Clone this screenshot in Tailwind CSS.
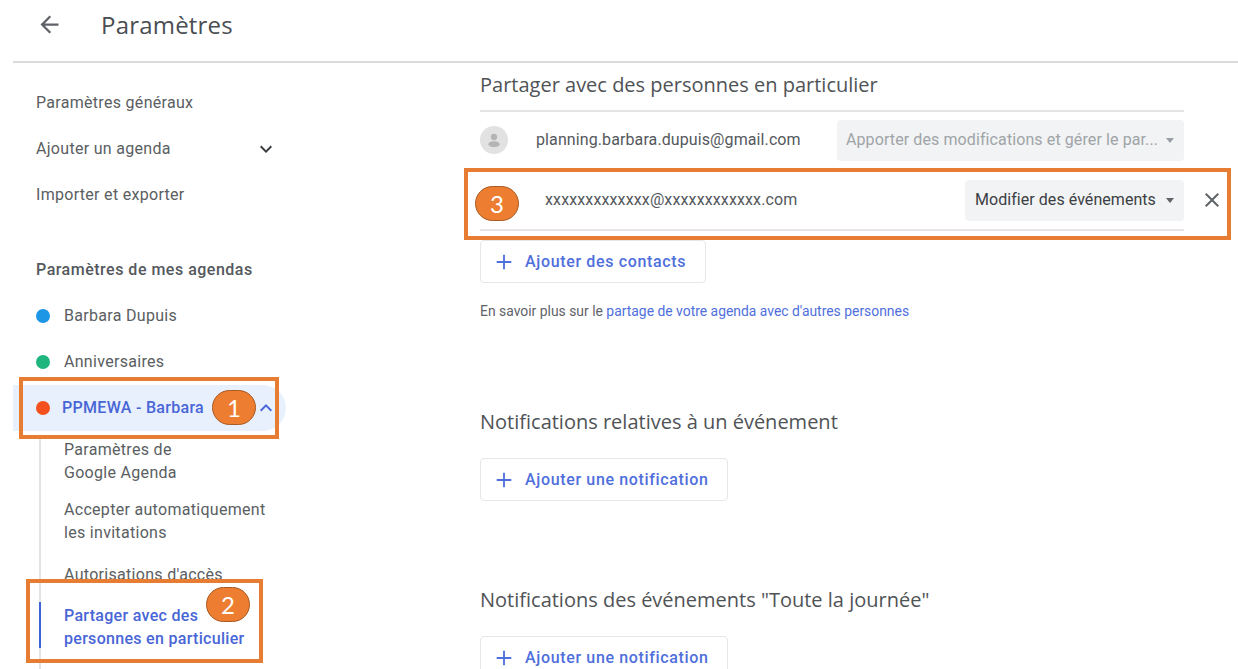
<!DOCTYPE html>
<html lang="fr">
<head>
  <meta charset="UTF-8" />
  <title>Paramètres</title>
  <script src="https://cdn.jsdelivr.net/npm/@tailwindcss/browser@4"></script>
</head>
<body class="bg-white">
  <div class="relative w-[1238px] h-[669px] overflow-hidden bg-white font-['Roboto',sans-serif] text-[#3c4043]">

    <!-- Barre du haut -->
    <header class="ml-[13px] h-[63px] border-b-2 border-[#dcdcdc] flex items-center pb-[12px]">
      <svg class="ml-[23px] w-[27px] h-[27px] text-[#5f6368]" viewBox="0 0 24 24" fill="currentColor"><path d="M20 11H7.83l5.59-5.59L12 4l-8 8 8 8 1.41-1.41L7.83 13H20v-2z"/></svg>
      <h1 class="ml-[38px] text-[24px] leading-[30px] tracking-[0.2px] font-['Open_Sans',sans-serif] text-[#4a4e52]">Paramètres</h1>
    </header>

    <div class="flex">
      <!-- Menu de gauche -->
      <nav class="w-[467px] shrink-0 ml-[13px] pt-[17px] text-[16px] tracking-[0.3px] text-[#5a5e62]">
        <div class="h-[46px] pl-[23px] flex items-center">Paramètres généraux</div>
        <div class="h-[46px] pl-[23px] w-[265px] flex items-center justify-between">
          <span>Ajouter un agenda</span>
          <svg class="w-[24px] h-[24px] text-[#3c4043]" viewBox="0 0 24 24" fill="currentColor"><path d="M7.41 8.59 12 13.17l4.59-4.58L18 10l-6 6-6-6z"/></svg>
        </div>
        <div class="h-[46px] pl-[23px] flex items-center">Importer et exporter</div>

        <div class="mt-[29px] h-[46px] pl-[23px] flex items-center font-medium tracking-[0.5px] text-[#54585c]">Paramètres de mes agendas</div>
        <div class="h-[46px] pl-[23px] flex items-center">
          <span class="w-[14px] h-[14px] rounded-full bg-[#1e96e6]"></span>
          <span class="ml-[14px]">Barbara Dupuis</span>
        </div>
        <div class="h-[46px] pl-[23px] flex items-center">
          <span class="w-[14px] h-[14px] rounded-full bg-[#1fb57f]"></span>
          <span class="ml-[14px]">Anniversaires</span>
        </div>
        <div class="h-[46px] w-[273px] pl-[23px] pr-[8px] flex items-center rounded-r-full bg-[#e8f0fe] text-[#4866d6] font-medium">
          <span class="w-[14px] h-[14px] rounded-full bg-[#f4511e]"></span>
          <span class="ml-[12px]">PPMEWA - Barbara</span>
          <svg class="ml-auto w-[24px] h-[24px]" viewBox="0 0 24 24" fill="currentColor"><path d="M7.41 15.41 12 10.83l4.59 4.58L18 14l-6-6-6 6z"/></svg>
        </div>

        <div class="ml-[26px] mt-[7px] border-l-2 border-[#e4e4e4] pl-[23px] w-[240px]">
          <div class="h-[46px] flex items-center leading-[23px]">Paramètres de<br>Google Agenda</div>
          <div class="mt-[14px] h-[46px] flex items-center leading-[23px]">Accepter automatiquement<br>les invitations</div>
          <div class="mt-[19px] h-[23px] flex items-center">Autorisations d'accès</div>
          <div class="relative mt-[18px] h-[46px] flex items-center leading-[23px] text-[#4866d6] font-medium">
            <span class="absolute left-[-25px] top-[-2px] w-[2px] h-[46px] bg-[#3f63d8]"></span>
            <span>Partager avec des<br>personnes en particulier</span>
          </div>
          <div class="mt-[16px] h-[23px] flex items-center">Configuration de</div>
        </div>
      </nav>

      <!-- Contenu -->
      <main class="w-[704px] shrink-0 pt-[7px] text-[#3c4043]">
        <section>
          <h2 class="h-[29px] leading-[29px] text-[20px] font-['Open_Sans',sans-serif] text-[#4f5356]">Partager avec des personnes en particulier</h2>
          <div class="mt-[11px] border-t-2 border-[#e4e4e4] h-[58px] flex items-center">
            <span class="w-[28px] h-[28px] rounded-full bg-[#e2e2e2] flex items-center justify-center">
              <svg class="w-[18px] h-[18px] text-[#b4b4b4]" viewBox="0 0 24 24" fill="currentColor"><circle cx="12" cy="8" r="4.2"/><ellipse cx="12" cy="17.5" rx="7.5" ry="3.8"/></svg>
            </span>
            <span class="ml-[28px] text-[16px] tracking-[0.1px] text-[#54585c]">planning.barbara.dupuis@gmail.com</span>
            <span class="ml-auto w-[347px] h-[41px] rounded-[4px] bg-[#f1f3f4] pl-[9px] pr-[10px] flex items-center justify-between text-[16px] tracking-[0.1px] text-[#a0a4a8]">
              <span class="whitespace-nowrap">Apporter des modifications et gérer le par...</span>
              <span class="w-0 h-0 border-x-[4.5px] border-x-transparent border-t-[5px] border-t-[#9aa0a6]"></span>
            </span>
          </div>
          <div class="relative h-[63px] border-b-2 border-[#e8e4e6] flex items-center pt-[3px]">
            <span class="ml-[65px] text-[16px] tracking-[0.13px] text-[#54585c]">xxxxxxxxxxxxx@xxxxxxxxxxxx.com</span>
            <span class="ml-auto w-[219px] h-[41px] rounded-[4px] bg-[#f1f3f4] pl-[10px] pr-[10px] flex items-center justify-between text-[16px] tracking-[0.05px] text-[#3c4043]">
              <span class="whitespace-nowrap">Modifier des événements</span>
              <span class="w-0 h-0 border-x-[4.5px] border-x-transparent border-t-[5px] border-t-[#5f6368]"></span>
            </span>
            <svg class="absolute left-[720px] top-[20px] w-[24px] h-[24px] text-[#5f6368]" viewBox="0 0 24 24" fill="currentColor"><path d="M19 6.41 17.59 5 12 10.59 6.41 5 5 6.41 10.59 12 5 17.59 6.41 19 12 13.41 17.59 19 19 17.59 13.41 12z"/></svg>
          </div>
          <button class="mt-[9px] w-[226px] h-[43px] rounded-[4px] border border-[#e4e6e8] flex items-center text-[16px] font-medium tracking-[0.65px] text-[#4f6fdc]">
            <svg class="ml-[12px] w-[22px] h-[22px]" viewBox="0 0 24 24" fill="currentColor"><path d="M20 13h-7v7h-2v-7H4v-2h7V4h2v7h7z"/></svg>
            <span class="ml-[10px]">Ajouter des contacts</span>
          </button>
          <p class="mt-[20px] h-[16px] leading-[16px] text-[13.9px] text-[#5f6368]">En savoir plus sur le <span class="text-[#4f6fdc]">partage de votre agenda avec d'autres personnes</span></p>
        </section>

        <section class="mt-[88px]">
          <h2 class="h-[29px] leading-[29px] text-[20px] font-['Open_Sans',sans-serif] text-[#4f5356]">Notifications relatives à un événement</h2>
          <button class="mt-[22px] w-[248px] h-[43px] rounded-[4px] border border-[#e4e6e8] flex items-center text-[16px] font-medium tracking-[0.65px] text-[#4f6fdc]">
            <svg class="ml-[12px] w-[22px] h-[22px]" viewBox="0 0 24 24" fill="currentColor"><path d="M20 13h-7v7h-2v-7H4v-2h7V4h2v7h7z"/></svg>
            <span class="ml-[10px]">Ajouter une notification</span>
          </button>
        </section>

        <section class="mt-[84px]">
          <h2 class="h-[29px] leading-[29px] text-[20px] font-['Open_Sans',sans-serif] text-[#4f5356]">Notifications des événements "Toute la journée"</h2>
          <button class="mt-[22px] w-[248px] h-[43px] rounded-[4px] border border-[#e4e6e8] flex items-center text-[16px] font-medium tracking-[0.65px] text-[#4f6fdc]">
            <svg class="ml-[12px] w-[22px] h-[22px]" viewBox="0 0 24 24" fill="currentColor"><path d="M20 13h-7v7h-2v-7H4v-2h7V4h2v7h7z"/></svg>
            <span class="ml-[10px]">Ajouter une notification</span>
          </button>
        </section>
      </main>
    </div>

    <!-- Annotations orange posées sur la capture -->
    <div class="absolute left-[19px] top-[377px] w-[260px] h-[62px] border-[4px] border-[#e77d32]"></div>
    <div class="absolute left-[26px] top-[579px] w-[237px] h-[84px] border-[4px] border-[#e77d32]"></div>
    <div class="absolute left-[464px] top-[168px] w-[767px] h-[72px] border-[4px] border-[#e77d32]"></div>

    <div class="absolute left-[212px] top-[390px] w-[44px] h-[35px] rounded-full bg-[#ed7d31] border border-[#a85a22] flex items-center justify-center text-white text-[24px] font-['Lato',sans-serif]">1</div>
    <div class="absolute left-[206px] top-[587px] w-[44px] h-[35px] rounded-full bg-[#ed7d31] border border-[#a85a22] flex items-center justify-center text-white text-[24px] font-['Lato',sans-serif]">2</div>
    <div class="absolute left-[475px] top-[186px] w-[44px] h-[35px] rounded-full bg-[#ed7d31] border border-[#a85a22] flex items-center justify-center text-white text-[24px] font-['Lato',sans-serif]">3</div>
  </div>
</body>
</html>
